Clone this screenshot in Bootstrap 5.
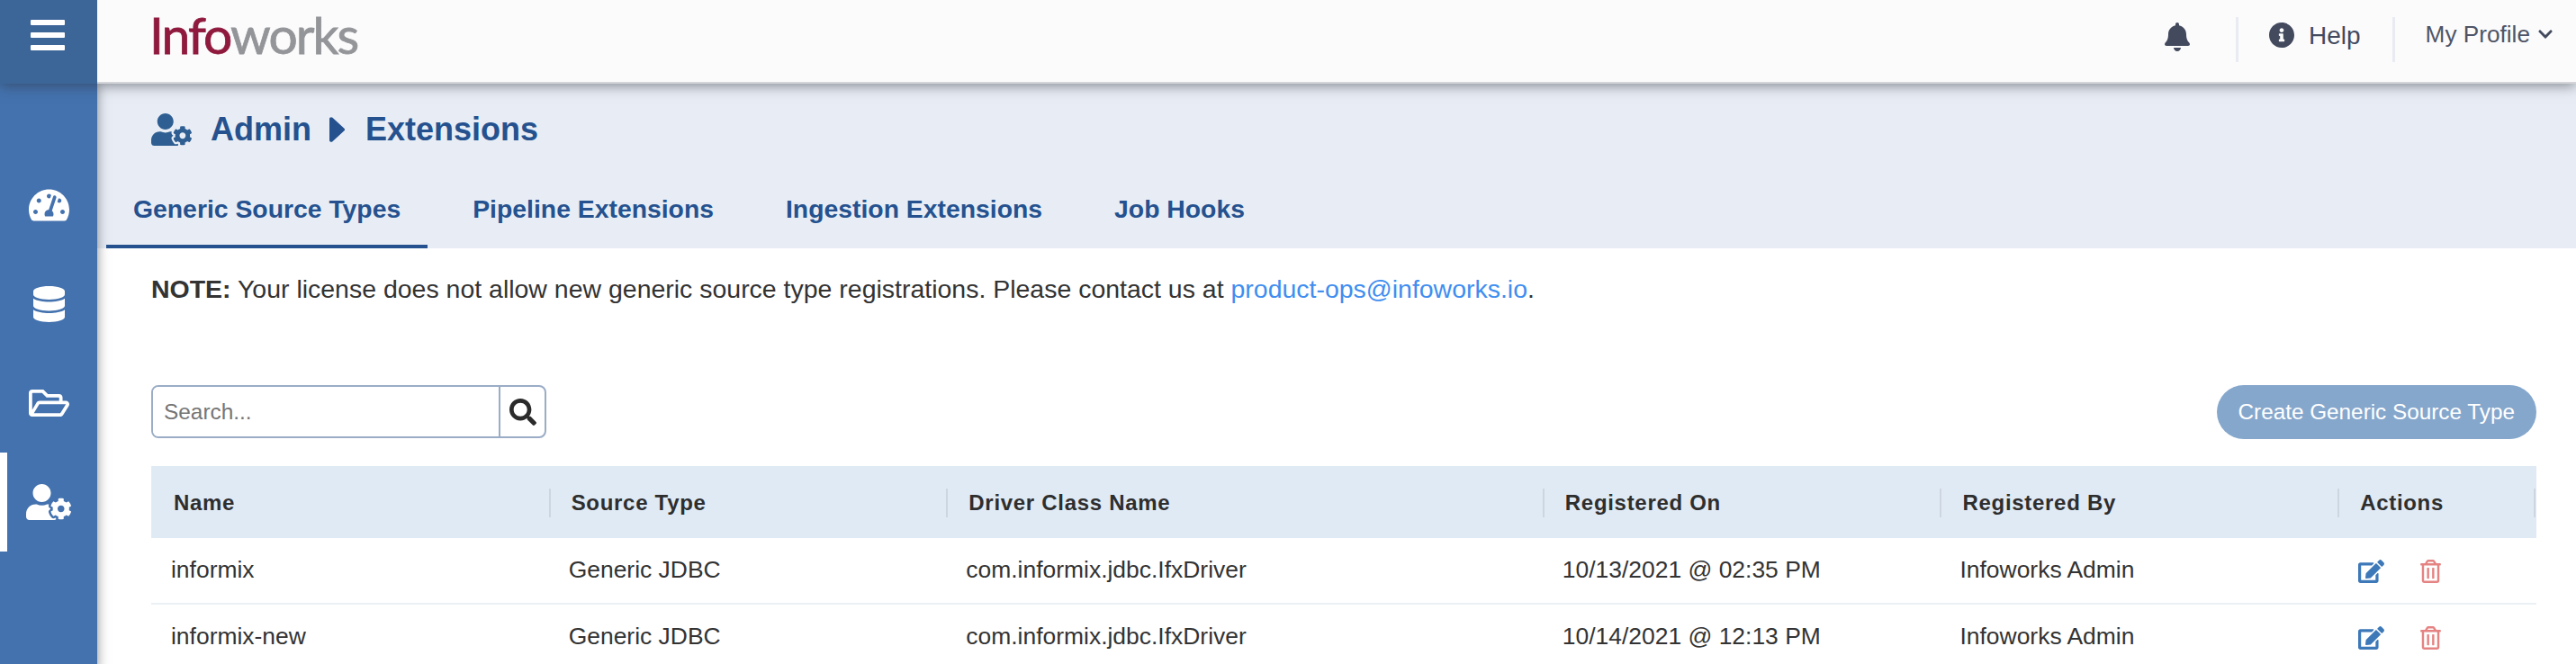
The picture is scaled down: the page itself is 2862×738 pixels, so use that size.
<!DOCTYPE html>
<html lang="en">
<head>
<meta charset="utf-8">
<title>Infoworks</title>
<link href="https://cdn.jsdelivr.net/npm/bootstrap@5.3.0/dist/css/bootstrap.min.css" rel="stylesheet">
<style>
html,body{height:738px;overflow:hidden;background:#fff;font-family:"Liberation Sans",Arial,sans-serif;color:#333}
.shell{height:738px}
.topbar{height:93px;background:#fbfbfc;border-bottom:2px solid #d4d5d8;box-shadow:0 2px 14px rgba(40,45,55,.55);position:relative;z-index:3;flex:none}
.burger{width:108px;height:93px;background:#3d6698;padding-top:22px;flex:none}
.burger i{display:block;width:38px;height:6px;margin:0 0 8px 34px;background:#fff;border-radius:1px}
.logo{margin-left:58px;font-family:Lato,sans-serif;font-size:57px;line-height:76px;letter-spacing:-1.95px;color:#939598;height:76px;-webkit-text-stroke:.8px currentColor}
.logo b{font-weight:400;color:#8f1a3e}
.tb-bell{width:28px;height:32px;fill:#434a5e;margin-right:51px;margin-top:-9px}
.tb-sep{width:3px;height:50px;background:#e8ebf2;margin-top:-3px}
.tb-info{width:28px;height:28px;fill:#434a5e;margin-left:34px;margin-right:16px;margin-top:-13px}
.tb-help{font-size:28px;color:#434a5e;margin-right:35px;margin-top:-12px}
.tb-prof{font-size:26.2px;color:#4f5566;margin-left:34px;margin-top:-13px;margin-right:9px}
.tb-chev{width:16px;height:18px;fill:#434a5e;margin-right:26px;margin-top:-16px}
.side{width:108px;background:#4472ae;padding-top:80px;flex:none;box-shadow:0 0 12px rgba(40,45,55,.55);position:relative;z-index:2}
.side-item{height:110px;fill:#fff}
.side-item.on{box-shadow:inset 8px 0 0 #fff}
.ic-gauge{width:45px;height:40px}
.ic-db{width:35px;height:40px}
.ic-folder{width:45px;height:40px}
.ic-cog{width:50px;height:40px}
.pagehead{background:#e8edf5;height:183px;padding-left:10px;flex:none}
.crumb{height:95px;padding:7px 0 0 50px;color:#25528f;font-size:36px;font-weight:700;fill:#2f5f92}
.crumb-ic{width:45px;height:36px;margin-right:21px}
.crumb-sep{width:17px;height:28px;margin:0 23px 0 20px;fill:#25528f}
.tabsbar{gap:20px;height:88px}
.tabsbar .nav-link{height:88px;padding:4px 30px 0;font-size:28.35px;font-weight:700;color:#25528f;border-bottom:4px solid transparent;display:flex;align-items:center}
.tabsbar .nav-link.active{border-bottom-color:#25528f}
.body-area{padding:0 44px 0 60px}
.note{font-size:28.47px;line-height:36px;height:86px;padding-top:27px;margin:0;color:#333}
.note a{color:#3f8ef0;text-decoration:none}
.tools{margin-top:66px;height:60px}
.searchbox{width:439px;height:59px;border:2px solid #9aacc6;border-radius:8px;overflow:hidden}
.searchbox input{border:0;outline:0;padding:0 12px;font-size:24.4px;font-family:inherit;flex:1;min-width:0;height:100%;background:#fff}
.searchbox input::placeholder{color:#757575;opacity:1}
.search-btn{width:51px;border-left:2px solid #9aacc6;fill:#2b2b2b}
.search-btn svg{width:30px;height:30px}
.create-btn{background:#86a7cc;border:0;color:#fff;font-size:24.3px;height:60px;padding:0 24px;border-radius:30px}
.thead-row{background:#e0eaf5;height:80px;margin-top:30px}
.th-in{height:32px;line-height:32px;border-left:2px solid #cdd6e0;padding-left:23px;font-size:24px;font-weight:700;letter-spacing:.7px;color:#2e2e2e;margin-top:1px}
.th-first{border-left-color:transparent}
.th-last{border-right:2px solid #cdd6e0;margin-right:1px}
.tr-row{height:74px;border-bottom:2px solid #ebf0f5;font-size:26.45px;color:#333}
.tr-row>div{padding-left:22px}
.act-edit{width:29px;height:26px;fill:#3d78b8;margin-right:40px}
.act-del{width:23px;height:26px;fill:#e58383}
.act-cell{padding-left:23px!important;margin-top:2px}
</style>
</head>
<body>
<svg width="0" height="0" class="d-none">
<symbol id="s-cog" viewBox="0 0 640 512"><path d="M610.5 373.3c2.6-14.1 2.6-28.5 0-42.6l25.8-14.9c3-1.7 4.3-5.2 3.3-8.5-6.7-21.6-18.2-41.2-33.2-57.4-2.3-2.5-6-3.1-9-1.4l-25.8 14.9c-10.9-9.3-23.4-16.5-36.9-21.3v-29.8c0-3.4-2.4-6.4-5.7-7.1-22.3-5-45-4.8-66.2 0-3.3.7-5.7 3.7-5.7 7.1v29.8c-13.5 4.8-26 12-36.9 21.3l-25.8-14.9c-2.9-1.7-6.7-1.1-9 1.4-15 16.2-26.5 35.8-33.2 57.4-1 3.3.4 6.8 3.3 8.5l25.8 14.9c-2.6 14.1-2.6 28.5 0 42.6l-25.8 14.9c-3 1.7-4.3 5.2-3.3 8.5 6.7 21.6 18.2 41.1 33.2 57.4 2.3 2.5 6 3.1 9 1.4l25.8-14.9c10.9 9.3 23.4 16.5 36.9 21.3v29.8c0 3.4 2.4 6.4 5.7 7.1 22.3 5 45 4.8 66.2 0 3.3-.7 5.7-3.7 5.7-7.1v-29.8c13.5-4.8 26-12 36.9-21.3l25.8 14.9c2.9 1.7 6.7 1.1 9-1.4 15-16.2 26.5-35.8 33.2-57.4 1-3.3-.4-6.8-3.3-8.5l-25.8-14.9zM496 400.5c-26.8 0-48.5-21.8-48.5-48.5s21.8-48.5 48.5-48.5 48.5 21.8 48.5 48.5-21.7 48.5-48.5 48.5zM224 256c70.7 0 128-57.3 128-128S294.7 0 224 0 96 57.3 96 128s57.3 128 128 128zm201.2 226.5c-2.3-1.2-4.6-2.6-6.8-3.9l-7.9 4.6c-6 3.4-12.8 5.3-19.6 5.3-10.9 0-21.4-4.6-28.9-12.6-18.3-19.8-32.3-43.9-40.2-69.6-5.5-17.7 1.9-36.4 17.9-45.7l7.9-4.6c-.1-2.6-.1-5.2 0-7.8l-7.9-4.6c-16-9.2-23.4-28-17.9-45.7.9-2.9 2.2-5.8 3.2-8.7-3.8-.3-7.5-1.2-11.4-1.2h-16.7c-22.2 10.2-46.9 16-72.9 16s-50.6-5.8-72.9-16h-16.7C60.2 288 0 348.2 0 422.4V464c0 26.5 21.5 48 48 48h352c10.1 0 19.5-3.2 27.2-8.5-1.2-3.8-2-7.7-2-11.8v-9.2z"/></symbol>
<symbol id="s-edit" viewBox="0 0 576 512"><path d="M402.6 83.2l90.2 90.2c3.8 3.8 3.8 10 0 13.8L274.4 405.6l-92.8 10.3c-12.4 1.4-22.9-9.1-21.5-21.5l10.3-92.8L388.8 83.2c3.8-3.8 10-3.8 13.8 0zm162-22.9l-48.8-48.8c-15.2-15.2-39.9-15.2-55.2 0l-35.4 35.4c-3.8 3.8-3.8 10 0 13.8l90.2 90.2c3.8 3.8 10 3.8 13.8 0l35.4-35.4c15.2-15.3 15.2-40 0-55.2zM384 346.2V448H64V128h229.8c3.2 0 6.2-1.3 8.5-3.5l40-40c7.6-7.6 2.2-20.5-8.5-20.5H48C21.5 64 0 85.5 0 112v352c0 26.5 21.5 48 48 48h352c26.5 0 48-21.5 48-48V306.2c0-10.7-12.9-16-20.5-8.5l-40 40c-2.2 2.3-3.5 5.3-3.5 8.5z"/></symbol>
<symbol id="s-trash" viewBox="0 0 448 512"><path d="M268 416h24a12 12 0 0 0 12-12V188a12 12 0 0 0-12-12h-24a12 12 0 0 0-12 12v216a12 12 0 0 0 12 12zM432 80h-82.41l-34-56.7A48 48 0 0 0 274.41 0H173.59a48 48 0 0 0-41.16 23.3L98.41 80H16A16 16 0 0 0 0 96v16a16 16 0 0 0 16 16h16v336a48 48 0 0 0 48 48h288a48 48 0 0 0 48-48V128h16a16 16 0 0 0 16-16V96a16 16 0 0 0-16-16zM171.84 50.91A6 6 0 0 1 177 48h94a6 6 0 0 1 5.15 2.91L293.61 80H154.39zM368 464H80V128h288zm-212-48h24a12 12 0 0 0 12-12V188a12 12 0 0 0-12-12h-24a12 12 0 0 0-12 12v216a12 12 0 0 0 12 12z"/></symbol>
</svg>
<div class="shell d-flex flex-column">
  <header class="topbar d-flex align-items-center">
    <div class="burger align-self-start"><i></i><i></i><i></i></div>
    <div class="logo align-self-start"><b>Info</b>works</div>
    <div class="ms-auto d-flex align-items-center">
      <svg class="tb-bell" viewBox="0 0 448 512"><path d="M224 512c35.32 0 63.97-28.65 63.97-64H160.03c0 35.35 28.65 64 63.97 64zm215.39-149.71c-19.32-20.76-55.47-51.99-55.47-154.29 0-77.7-54.48-139.9-127.94-155.16V32c0-17.67-14.32-32-31.98-32s-31.98 14.33-31.98 32v20.84C118.56 68.1 64.08 130.3 64.08 208c0 102.3-36.15 133.53-55.47 154.29-6 6.45-8.66 14.16-8.61 21.71.11 16.4 12.98 32 32.1 32h383.8c19.12 0 32-15.6 32.1-32 .05-7.55-2.61-15.27-8.61-21.71z"/></svg>
      <span class="tb-sep"></span>
      <svg class="tb-info" viewBox="8 8 496 496"><path d="M256 8C119.043 8 8 119.083 8 256c0 136.997 111.043 248 248 248s248-111.003 248-248C504 119.083 392.957 8 256 8zm0 110c23.196 0 42 18.804 42 42s-18.804 42-42 42-42-18.804-42-42 18.804-42 42-42zm56 254c0 6.627-5.373 12-12 12h-88c-6.627 0-12-5.373-12-12v-24c0-6.627 5.373-12 12-12h12v-64h-12c-6.627 0-12-5.373-12-12v-24c0-6.627 5.373-12 12-12h64c6.627 0 12 5.373 12 12v100h12c6.627 0 12 5.373 12 12v24z"/></svg>
      <span class="tb-help">Help</span>
      <span class="tb-sep"></span>
      <span class="tb-prof">My Profile</span>
      <svg class="tb-chev" viewBox="0 0 448 512"><path d="M207.029 381.476L12.686 187.132c-9.373-9.373-9.373-24.569 0-33.941l22.667-22.667c9.357-9.357 24.522-9.375 33.901-.04L224 284.505l154.745-154.021c9.379-9.335 24.544-9.317 33.901.04l22.667 22.667c9.373 9.373 9.373 24.569 0 33.941L240.971 381.476c-9.373 9.372-24.569 9.372-33.942 0z"/></svg>
    </div>
  </header>
  <div class="d-flex flex-grow-1">
    <nav class="side">
      <div class="side-item d-flex align-items-center justify-content-center">
        <svg class="ic-gauge" viewBox="0 0 576 512"><path d="M288 32C128.94 32 0 160.94 0 320c0 52.8 14.25 102.26 39.06 144.8 5.61 9.62 16.3 15.2 27.44 15.2h443c11.14 0 21.83-5.58 27.44-15.2C561.75 422.26 576 372.8 576 320c0-159.06-128.94-288-288-288zm0 64c14.71 0 26.58 10.13 30.32 23.65-1.11 2.26-2.64 4.23-3.45 6.67l-9.22 27.67c-5.13 3.49-10.97 6.01-17.64 6.01-17.67 0-32-14.33-32-32S270.33 96 288 96zM96 384c-17.67 0-32-14.33-32-32s14.33-32 32-32 32 14.33 32 32-14.33 32-32 32zm48-160c-17.67 0-32-14.33-32-32s14.33-32 32-32 32 14.33 32 32-14.33 32-32 32zm246.77-72.41l-61.33 184C343.13 347.33 352 364.54 352 384c0 11.72-3.38 22.55-8.88 32H232.88c-5.5-9.45-8.88-20.28-8.88-32 0-33.94 26.5-61.43 59.9-63.59l61.34-184.01c4.17-12.56 17.73-19.45 30.36-15.17 12.57 4.19 19.35 17.79 15.17 30.36zm14.66 57.2l15.52-46.55c3.47-1.29 7.13-2.23 11.05-2.23 17.67 0 32 14.33 32 32s-14.33 32-32 32c-11.38-.01-20.89-6.28-26.57-15.22zM480 384c-17.67 0-32-14.33-32-32s14.33-32 32-32 32 14.33 32 32-14.33 32-32 32z"/></svg>
      </div>
      <div class="side-item d-flex align-items-center justify-content-center">
        <svg class="ic-db" viewBox="0 0 448 512"><path d="M448 73.143v45.714C448 159.143 347.667 192 224 192S0 159.143 0 118.857V73.143C0 32.857 100.333 0 224 0s224 32.857 224 73.143zM448 176v102.857C448 319.143 347.667 352 224 352S0 319.143 0 278.857V176c48.125 33.143 136.208 48.572 224 48.572S399.874 209.143 448 176zm0 160v102.857C448 479.143 347.667 512 224 512S0 479.143 0 438.857V336c48.125 33.143 136.208 48.572 224 48.572S399.874 369.143 448 336z"/></svg>
      </div>
      <div class="side-item d-flex align-items-center justify-content-center">
        <svg class="ic-folder" viewBox="0 0 576 512"><path d="M527.9 224H480v-48c0-26.5-21.5-48-48-48H272l-64-64H48C21.5 64 0 85.5 0 112v288c0 26.5 21.5 48 48 48h400c16.5 0 31.9-8.5 40.7-22.6l79.9-128c20-31.9-3-73.4-40.7-73.4zM48 118c0-3.3 2.7-6 6-6h134.1l64 64H426c3.3 0 6 2.7 6 6v42H152c-16.8 0-32.4 8.8-41.1 23.2L48 351.4zm400 282H72l77.2-128H528z"/></svg>
      </div>
      <div class="side-item on d-flex align-items-center justify-content-center">
        <svg class="ic-cog"><use href="#s-cog"/></svg>
      </div>
    </nav>
    <main class="flex-grow-1 overflow-hidden">
      <section class="pagehead">
        <div class="crumb d-flex align-items-center">
          <svg class="crumb-ic"><use href="#s-cog"/></svg>
          <span>Admin</span>
          <svg class="crumb-sep" viewBox="0 105 168 302" preserveAspectRatio="none"><path d="M0 384.662V127.338c0-17.818 21.543-26.741 34.142-14.142l128.662 128.662c7.81 7.81 7.81 20.474 0 28.284L34.142 398.804C21.543 411.404 0 402.48 0 384.662z"/></svg>
          <span>Extensions</span>
        </div>
        <ul class="nav tabsbar">
          <li class="nav-item"><a class="nav-link active" href="#">Generic Source Types</a></li>
          <li class="nav-item"><a class="nav-link" href="#">Pipeline Extensions</a></li>
          <li class="nav-item"><a class="nav-link" href="#">Ingestion Extensions</a></li>
          <li class="nav-item"><a class="nav-link" href="#">Job Hooks</a></li>
        </ul>
      </section>
      <section class="body-area">
        <p class="note"><strong>NOTE:</strong> Your license does not allow new generic source type registrations. Please contact us at <a href="#">product-ops@infoworks.io</a>.</p>
        <div class="tools d-flex justify-content-between">
          <div class="searchbox d-flex">
            <input type="text" placeholder="Search...">
            <span class="search-btn d-flex align-items-center justify-content-center">
              <svg viewBox="0 0 512 512"><path d="M505 442.7L405.3 343c-4.5-4.5-10.6-7-17-7H372c27.6-35.3 44-79.7 44-128C416 93.1 322.9 0 208 0S0 93.1 0 208s93.1 208 208 208c48.3 0 92.7-16.4 128-44v16.3c0 6.4 2.5 12.5 7 17l99.7 99.7c9.4 9.4 24.6 9.4 33.9 0l28.3-28.3c9.4-9.4 9.4-24.6.1-34zM208 336c-70.7 0-128-57.2-128-128 0-70.7 57.2-128 128-128 70.7 0 128 57.2 128 128 0 70.7-57.2 128-128 128z"/></svg>
            </span>
          </div>
          <button type="button" class="btn create-btn">Create Generic Source Type</button>
        </div>
        <div class="row g-0 thead-row align-items-center">
          <div class="col-2"><div class="th-in th-first">Name</div></div>
          <div class="col-2"><div class="th-in">Source Type</div></div>
          <div class="col-3"><div class="th-in">Driver Class Name</div></div>
          <div class="col-2"><div class="th-in">Registered On</div></div>
          <div class="col-2"><div class="th-in">Registered By</div></div>
          <div class="col-1"><div class="th-in th-last">Actions</div></div>
        </div>
        <div class="row g-0 tr-row align-items-center">
          <div class="col-2">informix</div>
          <div class="col-2">Generic JDBC</div>
          <div class="col-3">com.informix.jdbc.IfxDriver</div>
          <div class="col-2">10/13/2021 @ 02:35 PM</div>
          <div class="col-2">Infoworks Admin</div>
          <div class="col-1 act-cell d-flex"><svg class="act-edit"><use href="#s-edit"/></svg><svg class="act-del"><use href="#s-trash"/></svg></div>
        </div>
        <div class="row g-0 tr-row align-items-center">
          <div class="col-2">informix-new</div>
          <div class="col-2">Generic JDBC</div>
          <div class="col-3">com.informix.jdbc.IfxDriver</div>
          <div class="col-2">10/14/2021 @ 12:13 PM</div>
          <div class="col-2">Infoworks Admin</div>
          <div class="col-1 act-cell d-flex"><svg class="act-edit"><use href="#s-edit"/></svg><svg class="act-del"><use href="#s-trash"/></svg></div>
        </div>
      </section>
    </main>
  </div>
</div>
<script src="https://cdn.jsdelivr.net/npm/bootstrap@5.3.0/dist/js/bootstrap.bundle.min.js"></script>
</body>
</html>
